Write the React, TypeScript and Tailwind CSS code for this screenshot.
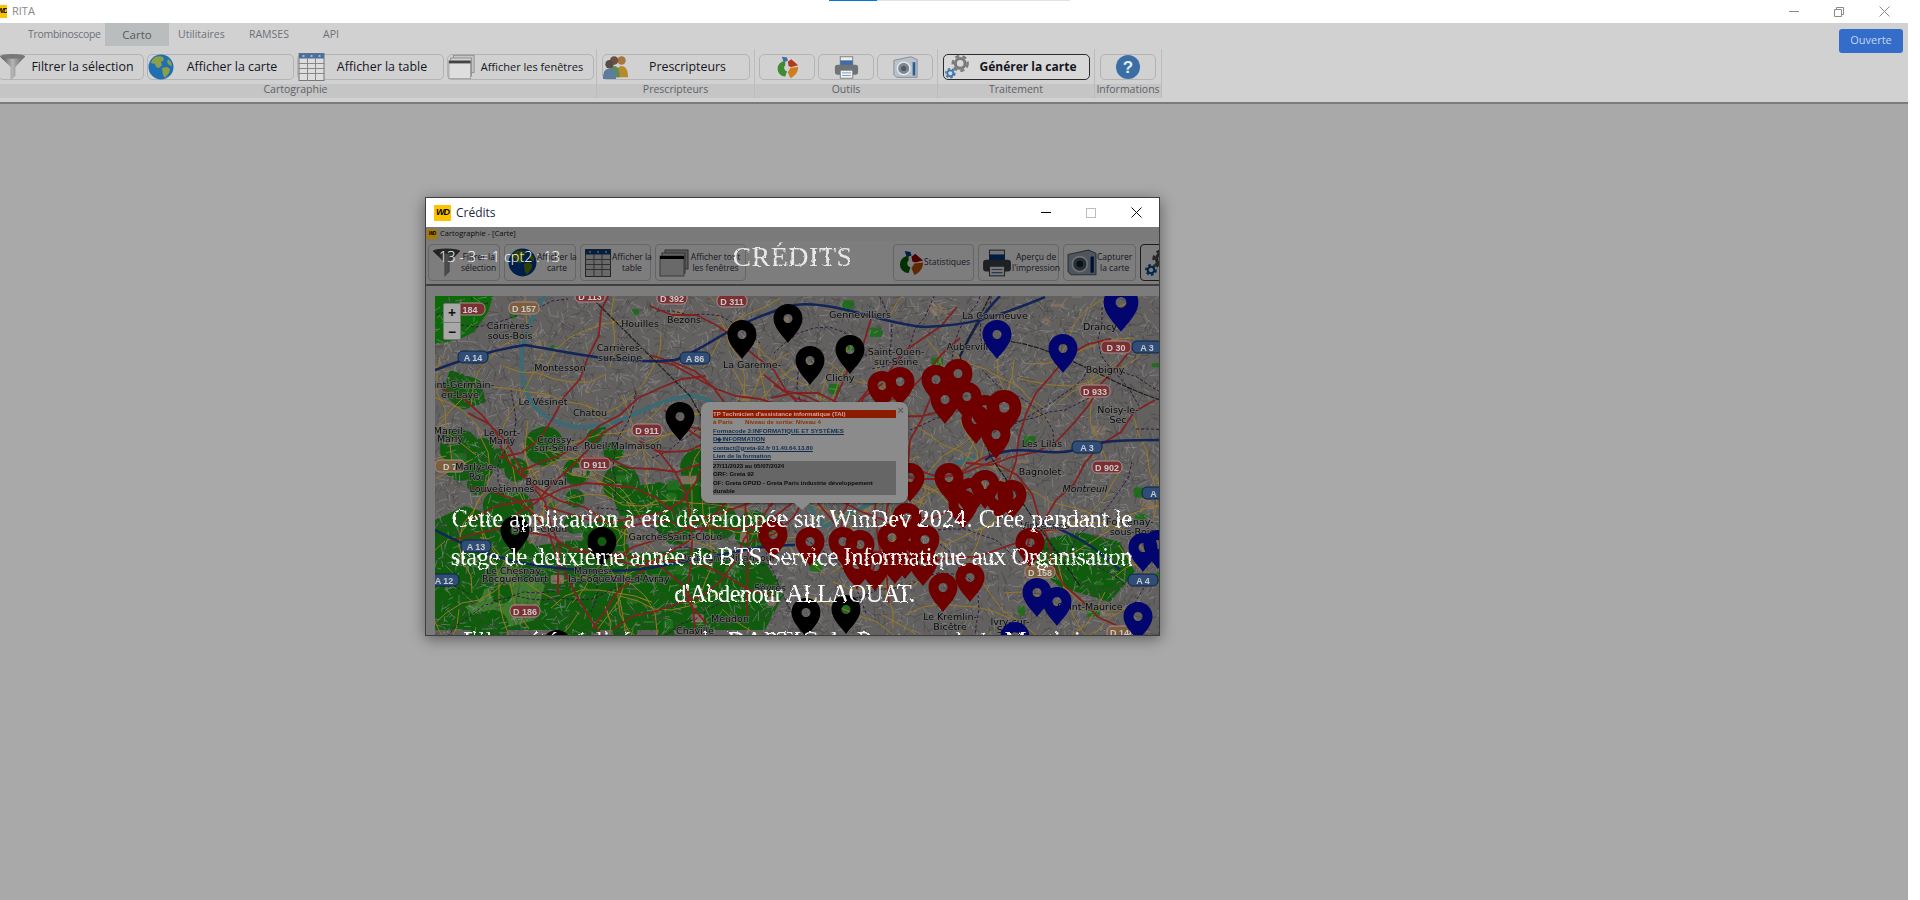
import React, { useMemo } from 'react';

const seeded = (seed: number) => () => {
    seed |= 0;
    seed = (seed + 0x6d2b79f5) | 0;
    let t = Math.imul(seed ^ (seed >>> 15), 1 | seed);
    t = (t + Math.imul(t ^ (t >>> 7), 61 | t)) ^ t;
    return ((t ^ (t >>> 14)) >>> 0) / 4294967296;
};

type IconProps = { size?: number };

const Funnel = ({ size = 28 }: IconProps) => (
    <svg width={size} height={size} viewBox="0 0 28 28">
        <defs>
            <linearGradient id="fun" x1="0" x2="1">
                <stop offset="0" stopColor="#4a4a4a" />
                <stop offset="0.5" stopColor="#b5b5b5" />
                <stop offset="1" stopColor="#5a5a5a" />
            </linearGradient>
        </defs>
        <path d="M1 3h26L17 14v9l-5 5V14z" fill="url(#fun)" />
        <ellipse cx="14" cy="3" rx="13" ry="2.5" fill="#777" />
    </svg>
);

const Globe = ({ size = 26 }: IconProps) => (
    <svg width={size} height={size} viewBox="0 0 26 26">
        <circle cx="13" cy="13" r="12.5" fill="#1f6fb2" />
        <path d="M7 3c3-1 6-1 8 0l1 3-3 2 1 3-3 3-3-1-1-3-4-1 1-3zM14 14l5-1 3 2-1 4-4 5-2-3zM20 5l3 3 1 4-3-1-2-3z" fill="#8ba046" />
    </svg>
);

const TableIcon = ({ size = 26 }: IconProps) => (
    <svg width={size} height={size} viewBox="0 0 26 28">
        <rect x="0.5" y="0.5" width="25" height="27" fill="#dedede" stroke="#777" />
        <rect x="0.5" y="0.5" width="25" height="5" fill="#4a6f9c" />
        <path d="M0 10.5h26M0 15.5h26M0 20.5h26M9 5v23M17 5v23" stroke="#888" strokeWidth="1" />
        <path d="M4 3h2M12 3h2M20 3h2" stroke="#fff" />
    </svg>
);

const WindowsIcon = ({ size = 28 }: IconProps) => (
    <svg width={size} height={size} viewBox="0 0 30 28">
        <rect x="6" y="1" width="23" height="19" fill="#c6c6c6" stroke="#8a8a8a" />
        <rect x="3" y="4" width="23" height="20" fill="#d4d4d4" stroke="#8a8a8a" />
        <rect x="1" y="7" width="24" height="20" fill="#dedede" stroke="#9a9a9a" />
        <rect x="1" y="7" width="24" height="3" fill="#444" />
    </svg>
);

const People = ({ size = 26 }: IconProps) => (
    <svg width={size} height={size} viewBox="0 0 28 26">
        <circle cx="20" cy="6" r="4.5" fill="#a8773f" />
        <path d="M14 24c0-8 2-12 6-12s7 4 7 12z" fill="#b98a2c" />
        <circle cx="12" cy="6" r="4.5" fill="#6b5140" />
        <path d="M6 24c0-8 2-12 6-12s6 4 6 12z" fill="#5c8a58" />
        <circle cx="7" cy="10" r="4.5" fill="#5a4a44" />
        <path d="M0 26c0-8 2-11 7-11s7 3 7 11z" fill="#5b7c9e" />
    </svg>
);

const ChartIcon = ({ size = 28 }: IconProps) => (
    <svg width={size} height={size} viewBox="0 0 28 28">
        <path d="M12 7a9 9 0 0 0 0 18l2-6a4 4 0 0 1-2-7z" fill="#3f8a35" />
        <path d="M15 8l4-3 8 7-8 2-3-1z" fill="#b2371f" />
        <path d="M18 15l9-1c0 6-3 10-9 13l-3-7z" fill="#cf7d20" />
        <path d="M8 2l6 1 1 4-5 1z" fill="#3d6ea5" />
    </svg>
);

const PrinterIcon = ({ size = 28 }: IconProps) => (
    <svg width={size} height={size} viewBox="0 0 28 28">
        <rect x="7" y="2" width="14" height="10" fill="#eee" stroke="#777" />
        <rect x="7" y="6" width="14" height="6" fill="#3e6ca3" />
        <rect x="1" y="11" width="26" height="11" rx="3" fill="#6f7378" />
        <rect x="7" y="17" width="14" height="9" fill="#f3f3f3" stroke="#777" />
        <path d="M9 20h10M9 23h10" stroke="#6f95bf" />
    </svg>
);

const CameraIcon = ({ size = 28 }: IconProps) => (
    <svg width={size} height={size} viewBox="0 0 28 28">
        <path d="M1 6l19-4 7 3v20H4l-3-3z" fill="#b9c2cb" stroke="#7d8994" />
        <circle cx="12" cy="15" r="7" fill="#7c8792" stroke="#e8ecef" strokeWidth="1.5" />
        <circle cx="12" cy="15" r="3" fill="#4f5b66" />
        <rect x="22" y="8" width="3" height="15" fill="#2f5c8c" />
    </svg>
);

const Gear = ({ x, y, r, color }: { x: number; y: number; r: number; color: string }) => (
    <g transform={`translate(${x} ${y})`} fill="none" stroke={color}>
        <circle r={r * 0.6} strokeWidth={r * 0.38} />
        <circle r={r * 0.92} strokeWidth={r * 0.3} strokeDasharray={`${r * 0.5} ${r * 0.42}`} />
    </g>
);

const GearsIcon = ({ size = 30 }: IconProps) => (
    <svg width={size} height={size} viewBox="0 0 30 28">
        <Gear x={18} y={10} r={9} color="#7b7b7b" />
        <Gear x={7} y={21} r={5.5} color="#3e78ad" />
    </svg>
);

const HelpIcon = ({ size = 24 }: IconProps) => (
    <svg width={size} height={size} viewBox="0 0 24 24">
        <circle cx="12" cy="12" r="12" fill="#3a6ea5" />
        <text x="12" y="18" textAnchor="middle" fontSize="17" fontWeight="700" fill="#e6edf4" fontFamily="Liberation Sans, sans-serif">?</text>
    </svg>
);

const WdLogo = ({ className }: { className: string }) => (
    <span className={`flex items-center justify-center text-black font-bold italic tracking-[-1px] font-['Liberation_Sans',sans-serif] ${className}`}>
        WD
    </span>
);

const RibbonButton = ({ w, icon, label, strong, small }: { w: string; icon: React.ReactNode; label?: string; strong?: boolean; small?: boolean }) => (
    <div className={`${w} h-[26px] shrink-0 flex items-center rounded-[5px] border ${strong ? 'border-[#2c2c2c] bg-[#d8d8d8]' : 'border-[#b4b4b4]'} ${label ? '' : 'justify-center'}`}>
        <span className={`flex items-center justify-center shrink-0 ${label ? 'w-[27px]' : ''}`}>{icon}</span>
        {label && (
            <span className={`flex-1 pr-[3px] text-center whitespace-nowrap text-[#15151f] ${small ? 'text-[11px]' : strong ? 'text-[12px]' : 'text-[12.4px]'} ${strong ? 'font-bold' : ''}`}>
                {label}
            </span>
        )}
    </div>
);

const RibbonGroup = ({ title, w, children }: { title: string; w: string; children: React.ReactNode }) => (
    <div className={`${w} shrink-0 flex flex-col`}>
        <div className="h-[38px] pt-[8px] flex gap-[3px] justify-center">{children}</div>
        <div className="h-[14px] bg-[#c5c5c5] text-[10.5px] leading-[11px] text-center text-[#5c6268] whitespace-nowrap">{title}</div>
    </div>
);

const Ribbon = () => (
    <div className="h-[79px] bg-[#d1d1d1] shrink-0 flex flex-col">
        <div className="h-[23px] flex items-center text-[10.5px] text-[#6b7178]">
            <div className="w-[105px] pl-[28px] tracking-[-0.3px] whitespace-nowrap">Trombinoscope</div>
            <div className="w-[64px] h-full flex items-center justify-center bg-[#babdbd] text-[#555b60] text-[11.5px]">Carto</div>
            <div className="w-[80px] pl-[9px]">Utilitaires</div>
            <div className="w-[74px]">RAMSES</div>
            <div className="w-[40px]">API</div>
            <div className="flex-1 flex justify-end pr-[5px]">
                <div className="w-[64px] h-[24px] mt-[12px] rounded-[3px] bg-[#336dc9] text-[#c6d6ee] text-[11px] flex items-center justify-center relative z-10">Ouverte</div>
            </div>
        </div>
        <div className="flex -ml-[5px] items-start">
            <RibbonGroup title="Cartographie" w="w-[601px]">
                <RibbonButton w="w-[146px]" icon={<Funnel size={30} />} label="Filtrer la sélection" />
                <RibbonButton w="w-[147px]" icon={<Globe />} label="Afficher la carte" />
                <RibbonButton w="w-[147px]" icon={<TableIcon size={28} />} label="Afficher la table" />
                <RibbonButton w="w-[147px]" icon={<WindowsIcon />} label="Afficher les fenêtres" small />
            </RibbonGroup>
            <div className="w-[1px] h-[49px] mt-[3px] bg-[#bcbcbc]" />
            <RibbonGroup title="Prescripteurs" w="w-[157px]">
                <RibbonButton w="w-[148px]" icon={<People />} label="Prescripteurs" />
            </RibbonGroup>
            <div className="w-[1px] h-[49px] mt-[3px] bg-[#bcbcbc]" />
            <RibbonGroup title="Outils" w="w-[182px]">
                <RibbonButton w="w-[56px]" icon={<ChartIcon size={24} />} />
                <RibbonButton w="w-[56px]" icon={<PrinterIcon size={25} />} />
                <RibbonButton w="w-[56px]" icon={<CameraIcon size={25} />} />
            </RibbonGroup>
            <div className="w-[1px] h-[49px] mt-[3px] bg-[#bcbcbc]" />
            <RibbonGroup title="Traitement" w="w-[156px]">
                <RibbonButton w="w-[147px]" icon={<GearsIcon size={28} />} label="Générer la carte" strong />
            </RibbonGroup>
            <div className="w-[1px] h-[49px] mt-[3px] bg-[#bcbcbc]" />
            <RibbonGroup title="Informations" w="w-[66px]">
                <RibbonButton w="w-[56px]" icon={<HelpIcon />} />
            </RibbonGroup>
            <div className="w-[1px] h-[49px] mt-[3px] bg-[#bcbcbc]" />
        </div>
    </div>
);

const InnerButton = ({ w, icon, lines, strong }: { w: string; icon: React.ReactNode; lines?: string[]; strong?: boolean }) => (
    <div className={`${w} h-[37px] shrink-0 flex items-center px-[3px] rounded-[4px] border ${strong ? 'border-[#1c1c1c]' : 'border-[#666]'}`}>
        <span className="[filter:brightness(0.5)_contrast(1.35)] shrink-0 flex">{icon}</span>
        {lines && (
            <span className="flex-1 text-center text-[8.5px] leading-[10.5px] text-[#15151f]">
                {lines.map((l) => (
                    <span key={l} className="block whitespace-nowrap">{l}</span>
                ))}
            </span>
        )}
    </div>
);

const blackPins = [[742, 320], [788, 304], [810, 346], [850, 335], [680, 402], [515, 516], [602, 527], [557, 630], [806, 598], [846, 595]];
const bluePins = [[997, 320], [1063, 334], [1121, 285, 1.2], [1143, 533], [1158, 530], [1037, 578], [1057, 587], [1138, 602], [1015, 622]];
const redPins = [
    [882, 371], [900, 367], [936, 365], [958, 359], [967, 382], [945, 385], [1004, 390, 1.2], [976, 405], [996, 420],
    [985, 395], [949, 463], [970, 478], [985, 470], [999, 481], [1012, 480], [910, 463], [810, 527], [843, 527], [860, 530], [892, 523], [907, 503],
    [925, 525], [1030, 528], [857, 550], [875, 552], [895, 545], [923, 547], [943, 573], [970, 563], [773, 520], [963, 490], [905, 540],
];

const labels: [number, number, string, boolean?][] = [
    [510, 329, 'Carrières-'], [510, 339, 'sous-Bois'], [458, 388, 'Saint-Germain-'], [460, 398, 'en-Laye'], [640, 327, 'Houilles'], [684, 323, 'Bezons'],
    [620, 351, 'Carrières-'], [620, 361, 'sur-Seine'], [560, 371, 'Montesson'], [752, 368, 'La Garenne-'], [860, 318, 'Gennevilliers'], [896, 355, 'Saint-Ouen-'], [896, 365, 'sur-Seine'],
    [995, 319, 'La Courneuve'], [976, 350, 'Aubervilliers'], [1100, 330, 'Drancy'], [840, 381, 'Clichy'], [1105, 373, 'Bobigny'], [1118, 413, 'Noisy-le-'], [1118, 423, 'Sec'],
    [1042, 447, 'Les Lilas'], [1040, 475, 'Bagnolet'], [1085, 492, 'Montreuil', true], [1130, 525, 'Fontenay-'], [1132, 535, 'sous-Bois'], [1045, 529, 'Vincennes'],
    [450, 434, 'Mareil-'], [450, 442, 'Marly'], [476, 470, 'Marly-le-'], [476, 480, 'Roi'], [502, 436, 'Le Port-'], [502, 444, 'Marly'], [543, 405, 'Le Vésinet'], [590, 416, 'Chatou'], [556, 443, 'Croissy-'], [556, 451, 'sur-Seine'],
    [623, 449, 'Rueil-Malmaison'], [546, 485, 'Bougival'], [502, 492, 'Louveciennes'], [540, 532, 'Saint-Cloud'], [648, 540, 'Garches'], [695, 540, 'Saint-Cloud'], [515, 574, 'Le Chesnay-'], [515, 582, 'Rocquencourt'],
    [593, 574, 'Marnes-'], [596, 582, 'la-Coquette'], [640, 582, "Ville-d'Avray"], [730, 561, 'Boulogne-Billancourt'], [770, 591, 'Sèvres'], [730, 622, 'Meudon'], [695, 634, 'Chaville'], [950, 620, 'Le Kremlin-'], [950, 630, 'Bicêtre'], [1010, 625, 'Ivry-sur-'], [1010, 633, 'Seine'], [1090, 610, 'Saint-Maurice'],
];

const badges: [number, number, string, 'r' | 'b' | 'o'][] = [
    [470, 309, '184', 'r'], [524, 308, 'D 157', 'o'], [590, 296, 'D 113', 'r'], [672, 298, 'D 392', 'r'], [732, 301, 'D 311', 'r'], [473, 357, 'A 14', 'b'], [695, 358, 'A 86', 'b'],
    [647, 430, 'D 911', 'r'], [595, 464, 'D 911', 'r'], [476, 546, 'A 13', 'b'], [444, 580, 'A 12', 'b'], [525, 611, 'D 186', 'r'], [1095, 391, 'D 933', 'r'], [1087, 447, 'A 3', 'b'], [1107, 467, 'D 902', 'r'],
    [1116, 347, 'D 30', 'r'], [1147, 347, 'A 3', 'b'], [1143, 580, 'A 4', 'b'], [1040, 572, 'D 158', 'o'], [1122, 632, 'D 148', 'o'], [1157, 493, 'A 1', 'b'], [450, 466, 'D 7', 'o'],
];

const green = [
    'M435 296h58l-5 16-14 20-16 8-23 4z',
    'M435 520l30-14 30 10 40 30 40-6 60 14 70-6 60 14 20 30-20 38H435z',
    'M470 575l45-10 30 20-10 35-45 12-25-25z',
    'M1040 540l40-8 40 10 15 30-25 30-50-15-25-20z',
    'M610 490l50-8 30 12-10 18-60 4z',
    'M450 370l30 10 6 22-24 8-20-16z',
];

const MapLayer = () => {
    const { light, dark, orange, red, purple, patches, blobs } = useMemo(() => {
        const r = seeded(11);
        let light = '';
        let dark = '';
        for (let i = 0; i < 8500; i++) {
            const x = 435 + r() * 725;
            const y = 296 + r() * 340;
            const a = r() * Math.PI;
            const l = 3 + r() * 8;
            const seg = `M${x.toFixed(1)} ${y.toFixed(1)}l${(Math.cos(a) * l).toFixed(1)} ${(Math.sin(a) * l).toFixed(1)}`;
            if (r() > 0.55) light += seg;
            else dark += seg;
        }
        const wander = (count: number, steps: number, stepLen: number, radial: boolean) => {
            let out = '';
            for (let i = 0; i < count; i++) {
                let x = 435 + r() * 725;
                let y = 296 + r() * 340;
                let a = radial ? Math.atan2(470 - y, 880 - x) : r() * Math.PI * 2;
                out += `M${x.toFixed(0)} ${y.toFixed(0)}`;
                for (let s = 0; s < steps; s++) {
                    a += (r() - 0.5) * 0.9;
                    x += Math.cos(a) * stepLen;
                    y += Math.sin(a) * stepLen;
                    out += `L${x.toFixed(0)} ${y.toFixed(0)}`;
                }
            }
            return out;
        };
        const patches: [number, number, number, number][] = [];
        for (let i = 0; i < 90; i++) patches.push([435 + r() * 725, 296 + r() * 340, 4 + r() * 12, 3 + r() * 8]);
        const blobs: [number, number, number][] = [];
        for (let i = 0; i < 60; i++) blobs.push([435 + r() * 320, 430 + r() * 206, 5 + r() * 16]);
        return { light, dark, orange: wander(120, 6, 18, false), red: wander(38, 9, 24, true), purple: wander(36, 7, 16, false), patches, blobs };
    }, []);

    return (
        <svg className="absolute inset-0 w-full h-full blur-[0.3px]" viewBox="435 296 725 340">
            <rect x="435" y="296" width="725" height="340" fill="#636060" />
            {green.map((d, i) => (
                <path key={i} d={d} fill={i === 0 ? '#0a6a06' : i === 2 ? '#3f7b2c' : '#0f5c0c'} />
            ))}
            {blobs.map(([x, y, s], i) => (
                <circle key={i} cx={x} cy={y} r={s} fill="#0f5c0c" />
            ))}
            {patches.map(([x, y, w, h], i) => (
                <rect key={i} x={x} y={y} width={w} height={h} rx="2" fill={i % 2 === 0 ? '#7d6f5f' : '#1f6e1c'} />
            ))}
            <path d={light} stroke="#8f8b8b" strokeWidth="0.6" fill="none" />
            <path d={dark} stroke="#464444" strokeWidth="0.6" fill="none" />
            <path d="M545 296c-20 30-30 60-20 90 6 30 40 45 70 40 30 0 60-30 100-30 25 5 50 30 80 60 20 30 40 60 50 70 40-20 100-50 150-70" stroke="#3b6a72" strokeWidth="4" fill="none" />
            <path d={orange} stroke="#9a7a22" strokeWidth="1" fill="none" />
            <path d={purple} stroke="#2f1840" strokeWidth="1" strokeDasharray="3 2" fill="none" />
            <path d={red} stroke="#832020" strokeWidth="1.8" fill="none" />
            <path d="M435 370c40-15 60-20 90-25 60 10 100 20 150 15 30-10 60-40 120-55 40-5 90 20 130 22 40-2 60-5 120-30M435 530c30 15 60 30 100 35 30 5 90 10 130 0 60-10 90-20 130-20M1160 440c-40 0-60 0-85 10-30 8-60-10-90 10M1120 570c-30-30-60-40-80-50M1000 296c-20 20-30 40-40 60" stroke="#122458" strokeWidth="2.5" fill="none" />
            <path d="M590 296l100 100 50 90M1160 400c-60-20-110-60-170-60M990 296l-30 60 30 100 90 130" stroke="#1c1c1c" strokeWidth="1.2" strokeDasharray="5 1" fill="none" />
            {badges.map(([x, y, t, k], i) => (
                <g key={i}>
                    <rect
                        x={x - 15}
                        y={y - 6}
                        width="30"
                        height="12"
                        rx="5"
                        fill={k === 'b' ? '#2f4d77' : k === 'o' ? '#7d5f3e' : '#7a3033'}
                        stroke={k === 'b' ? '#0e2248' : '#a88f8f'}
                    />
                    <text x={x} y={y + 3.5} textAnchor="middle" fontSize="9" fontWeight="700" fill="#c9c9c9" fontFamily="Liberation Sans, sans-serif">{t}</text>
                </g>
            ))}
            {labels.map(([x, y, t, it], i) => (
                <text
                    key={i}
                    x={x}
                    y={y}
                    textAnchor="middle"
                    fontSize="9.5"
                    fontStyle={it ? 'italic' : 'normal'}
                    fill="#080808"
                    stroke="#6e6e6e"
                    strokeWidth="1.4"
                    paintOrder="stroke"
                    fontFamily="DejaVu Sans, sans-serif"
                >
                    {t}
                </text>
            ))}
            {[
                ...redPins.map((p) => ({ x: p[0], y: p[1], s: p[2] ?? 1, fill: '#6e0000' })),
                ...blackPins.map((p) => ({ x: p[0], y: p[1], s: 1, fill: '#000' })),
                ...bluePins.map((p) => ({ x: p[0], y: p[1], s: p[2] ?? 1, fill: '#02056e' })),
            ].map((p, i) => (
                <path
                    key={i}
                    transform={`translate(${p.x} ${p.y}) scale(${p.s})`}
                    fill={p.fill}
                    fillRule="evenodd"
                    d="M0 0c8.5 0 14.5 6.5 14.5 14.5C14.5 24 5 32 0 39-5 32-14.5 24-14.5 14.5-14.5 6.5-8.5 0 0 0zM0 10a4.5 4.5 0 1 0 .01 0z"
                />
            ))}
        </svg>
    );
};

const MapPopup = () => (
    <div className="absolute left-[266px] top-[106px] w-[207px] h-[101px] rounded-[8px] bg-[#8b8b8b] px-[12px] pt-[8px] font-['Liberation_Sans',sans-serif] font-bold text-[6.1px] leading-[8.5px] shadow-[0_1px_3px_rgba(0,0,0,0.5)] blur-[0.3px]">
        <span className="absolute right-[4px] top-[3px] text-[#5f5f5f] text-[11px] leading-[11px]">×</span>
        <div className="bg-[#8c1c00] text-[#d4a7a0] h-[8px] whitespace-nowrap">TP Technicien d'assistance informatique (TAI)</div>
        <div className="flex gap-[12px] text-[#8c3200]">
            <span>à Paris</span>
            <span>Niveau de sortie: Niveau 4</span>
        </div>
        <div className="text-[#0f2c4f] underline whitespace-nowrap">Formacode 3:INFORMATIQUE ET SYSTÈMES</div>
        <div className="text-[#0f2c4f] underline whitespace-nowrap">D◈INFORMATION</div>
        <div className="text-[#0f2c4f] underline whitespace-nowrap">contact@greta-92.fr 01.40.64.13.80</div>
        <div className="text-[#0f2c4f] underline whitespace-nowrap">Lien de la formation</div>
        <div className="bg-[#666] h-[34px] pt-[1px] text-[#0c0c0c]">
            <div>27/11/2023 au 05/07/2024</div>
            <div>ORF: Greta 92</div>
            <div className="whitespace-nowrap">OF: Greta GPI2D - Greta Paris industrie développement</div>
            <div>durable</div>
        </div>
        <div className="absolute left-[92px] -bottom-[7px] w-0 h-0 border-l-[9px] border-r-[9px] border-t-[8px] border-l-transparent border-r-transparent border-t-[#8b8b8b]" />
    </div>
);

const CreditsWindow = () => (
    <div className="absolute left-[425px] top-[197px] w-[735px] h-[439px] border border-[#3e3e3e] bg-[#737373] overflow-hidden flex flex-col shadow-[0_3px_14px_rgba(0,0,0,0.45)]">
        <div className="h-[29px] bg-white flex items-center shrink-0 pl-[8px]">
            <WdLogo className="w-[17px] h-[16px] text-[9px] rounded-[1px] bg-[#fdc300]" />
            <span className="ml-[5px] text-[12px] text-[#1c2740]">Crédits</span>
            <div className="ml-auto flex items-center gap-[35px] pr-[17px]">
                <span className="w-[10px] h-[1px] bg-black" />
                <span className="w-[10px] h-[10px] border border-[#bdbdbd]" />
                <svg width="11" height="11" viewBox="0 0 11 11">
                    <path d="M.5.5l10 10M10.5.5l-10 10" stroke="#111" strokeWidth="1" />
                </svg>
            </div>
        </div>
        <div className="h-[14px] bg-[#7a7a7a] flex items-center shrink-0 pl-[1px] text-[7.5px] text-[#0c0c0c]">
            <WdLogo className="w-[10px] h-[10px] text-[5px] bg-[#a67b00]" />
            <span className="ml-[3px]">Cartographie - [Carte]</span>
        </div>
        <div className="h-[45px] shrink-0 bg-[#7d7d7d] flex items-start pt-[3px] pl-[2px] gap-[4px] border-b-[2px] border-[#3f3f3f]">
            <InnerButton w="w-[72px]" icon={<Funnel size={29} />} lines={['Filtrer la', 'sélection']} />
            <InnerButton w="w-[72px]" icon={<Globe size={29} />} lines={['Afficher la', 'carte']} />
            <InnerButton w="w-[71px]" icon={<TableIcon size={28} />} lines={['Afficher la', 'table']} />
            <InnerButton w="w-[91px]" icon={<WindowsIcon size={30} />} lines={['Afficher tout', 'les fenêtres']} />
            <div className="w-[139px] shrink-0" />
            <InnerButton w="w-[81px]" icon={<ChartIcon size={27} />} lines={['Statistiques']} />
            <InnerButton w="w-[81px]" icon={<PrinterIcon size={30} />} lines={['Aperçu de', "l'impression"]} />
            <InnerButton w="w-[73px]" icon={<CameraIcon size={30} />} lines={['Capturer', 'la carte']} />
            <InnerButton w="w-[40px]" icon={<GearsIcon size={30} />} strong />
        </div>
        <div className="flex-1 relative bg-[#7c7c7c] pl-[9px] pt-[10px]">
            <div className="relative w-[725px] h-[340px] overflow-hidden">
                <MapLayer />
                <div className="absolute left-[8px] top-[7px] w-[18px] h-[37px] rounded-[2px] bg-[#a8a8a8] flex flex-col text-[#111] font-bold text-[14px] leading-[18px] text-center border border-[#777]">
                    <span className="border-b border-[#777]">+</span>
                    <span>−</span>
                </div>
                <MapPopup />
            </div>
        </div>
        <div className="absolute left-[13px] top-[48px] text-[14.5px] font-light text-white whitespace-nowrap">13 - 3 = 1 cpt2 : 13</div>
        <div className="absolute inset-x-0 top-[38px] text-center text-[#e8e8e8] text-[28px] tracking-[0.5px] font-['Liberation_Serif',serif] [filter:url(#rough)]">CRÉDITS</div>
        <div className="absolute inset-x-0 top-[302px] h-[136px] overflow-hidden text-center text-white text-[24.5px] leading-[37.5px] font-['Liberation_Serif',serif] [filter:url(#rough)]">
            <div className="pr-[1px] whitespace-nowrap">Cette application à été développée sur WinDev 2024. Crée pendant le</div>
            <div className="pr-[2px] tracking-[-0.45px] whitespace-nowrap">stage de deuxième année de BTS Service Informatique aux Organisation</div>
            <div className="pl-[4px] tracking-[-0.7px] whitespace-nowrap">d'Abdenour ALLAOUAT.</div>
            <div className="mt-[9px] pr-[4px] tracking-[0.4px] whitespace-nowrap">Elle a été réalisée pour la DAPTIC du Rectorat de la Martinique</div>
        </div>
    </div>
);

const App = () => (
    <div className="relative w-[1920px] h-[900px] overflow-hidden bg-white flex flex-col font-['Open_Sans',sans-serif]">
        <svg className="absolute w-0 h-0">
            <filter id="rough">
                <feTurbulence type="fractalNoise" baseFrequency="0.22" numOctaves="2" seed="4" />
                <feDisplacementMap in="SourceGraphic" scale="3.2" />
            </filter>
        </svg>
        <div className="absolute top-0 left-[829px] w-[48px] h-[1px] bg-[#0078d7]" />
        <div className="absolute top-0 left-[877px] w-[193px] h-[1px] bg-[#dce6ea]" />
        <div className="w-[1908px] flex flex-col flex-1">
            <div className="h-[23px] shrink-0 flex items-center">
                <WdLogo className="w-[7px] h-[13px] text-[7px] overflow-hidden justify-end bg-[#fdc300]" />
                <span className="ml-[5px] text-[11px] text-[#888]">RITA</span>
                <div className="ml-auto flex items-center gap-[35px] pr-[18px]">
                    <span className="w-[10px] h-[1px] bg-[#8a8a8a]" />
                    <svg width="10" height="10" viewBox="0 0 10 10" fill="none" stroke="#8a8a8a">
                        <path d="M.5 2.5h7v7h-7zM2.5 2.5v-2h7v7h-2" />
                    </svg>
                    <svg width="11" height="11" viewBox="0 0 11 11">
                        <path d="M.5.5l10 10M10.5.5l-10 10" stroke="#8a8a8a" />
                    </svg>
                </div>
            </div>
            <Ribbon />
            <div className="h-[2px] shrink-0 bg-[#7b7b7b]" />
            <div className="flex-1 bg-[#a9a9a9]" />
        </div>
        <CreditsWindow />
    </div>
);

export default App;
